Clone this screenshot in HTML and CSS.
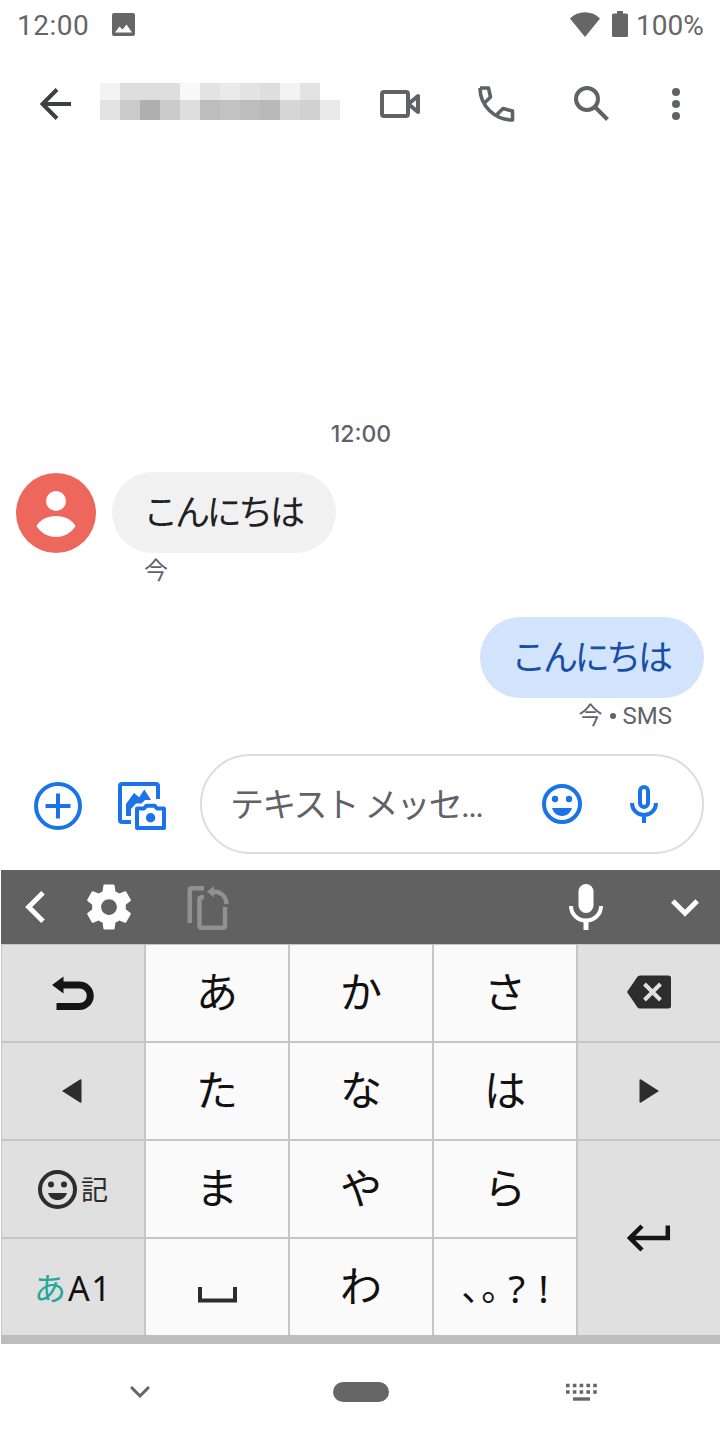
FILE: index.html
```html
<!DOCTYPE html>
<html lang="ja">
<head>
  <meta charset="UTF-8">
  <meta name="viewport" content="width=device-width, initial-scale=1.0">
  <title>メッセージ</title>
  <link rel="stylesheet" href="styles.css">
</head>
<body>
  <div class="phone">
    <div class="status-bar">
      <span class="clock">12:00</span>
      <svg class="status-image" width="23" height="23" viewBox="0 0 23 23"><path fill="#666" fill-rule="evenodd" d="M2 0h19a2 2 0 0 1 2 2v19a2 2 0 0 1-2 2H2a2 2 0 0 1-2-2V2a2 2 0 0 1 2-2zM3 19.500h17l-5.500-8-4 5-3-3z"/></svg>
      <svg class="wifi" width="30" height="25" viewBox="0 0 30 25"><path fill="#666" d="M0 6.500C8-1.700 22-1.700 30 6.500L15 25z"/></svg>
      <svg class="battery" width="16" height="26" viewBox="0 0 16 26"><path fill="#666" d="M5 0h6v2.500h3.500Q16 2.500 16 4v20.500q0 1.500-1.500 1.500h-13Q0 26 0 24.500V4q0-1.500 1.500-1.500H5z"/></svg>
      <span class="percent">100%</span>
    </div>

    <div class="app-bar">
      <svg width="32" height="32" viewBox="0 0 32 32" fill="none" stroke="#3c4043" stroke-width="4"><path d="M33 16H4M18 1.500L3.500 16 18 30.500"/></svg>
      <div class="contact-name">
        <i class="g1"></i><i class="g3"></i><i class="g3"></i><i class="g3"></i><i class="g0"></i><i class="g2"></i><i class="g12"></i><i class="g2"></i><i class="g3"></i><i class="g1"></i><i class="g2"></i><i></i>
        <i class="g2"></i><i class="g5"></i><i class="g8"></i><i class="g5"></i><i class="g3"></i><i class="g6"></i><i class="g56"></i><i class="g6"></i><i class="g7"></i><i class="g4"></i><i class="g45"></i><i class="g12"></i>
      </div>
      <svg class="video" width="40" height="32" viewBox="0 0 40 32" fill="none" stroke="#5f6368" stroke-width="4" stroke-linejoin="round"><rect x="2" y="4" width="26" height="24" rx="2"/><path d="M29 15.500L38 8v16l-9-7.500z"/></svg>
      <svg class="call" width="40" height="40" viewBox="0 0 40 40" fill="none" stroke="#5f6368" stroke-width="3.600" stroke-linejoin="round"><path d="M4 4h8.500l2 9-6.500 6.500M4 4c0 18 15 32 32.500 32v-9l-9.500-2.500-6.500 6.500"/></svg>
      <svg class="search" width="40" height="40" viewBox="0 0 40 40" fill="none" stroke="#5f6368" stroke-width="4"><circle cx="15" cy="15" r="11"/><path d="M23 23l12.500 12.500"/></svg>
      <svg class="more" width="8" height="32" viewBox="0 0 8 32" fill="#5f6368"><circle cx="4" cy="4" r="4"/><circle cx="4" cy="16" r="4"/><circle cx="4" cy="28" r="4"/></svg>
    </div>

    <div class="conversation">
      <div class="timestamp">12:00</div>
      <div class="message received">
        <svg class="avatar" width="80" height="80" viewBox="0 0 80 80"><circle cx="40" cy="40" r="40" fill="#ee675c"/><circle cx="40" cy="28" r="10" fill="#fff"/><path fill="#fff" d="M20.500 53C24 46.500 32 43 40 43s16 3.500 19.500 10C56 59.500 48 64 40 64s-16-4.500-19.500-11z"/></svg>
        <div class="content">
          <div class="bubble">こんにちは</div>
          <div class="meta">今</div>
        </div>
      </div>
      <div class="message sent">
        <div class="content">
          <div class="bubble">こんにちは</div>
          <div class="meta">今<b class="dot"></b>SMS</div>
        </div>
      </div>
    </div>

    <div class="composer">
      <svg class="plus" width="48" height="48" viewBox="0 0 48 48" fill="none" stroke="#1a73e8" stroke-width="4"><circle cx="24" cy="24" r="22"/><path d="M24 11.500v25M11.500 24h25"/></svg>
      <svg class="gallery" width="48" height="48" viewBox="0 0 48 48"><path fill="none" stroke="#1a73e8" stroke-width="4" d="M13 40H4q-2 0-2-2V4q0-2 2-2h34q2 0 2 2v13"/><path fill="#1a73e8" d="M8 34V22l8-11 5.200 4.200L26.300 7.500 33 18h-6l-3.500 3.500H18L13 27v7z"/><path fill="none" stroke="#1a73e8" stroke-width="4" stroke-linejoin="round" d="M19 26.500h7l2.500-2.800h8l2.500 2.800h7V46H19z"/><circle cx="32.600" cy="35.700" r="4.700" fill="#1a73e8"/></svg>
      <div class="input-box">
        <span class="placeholder">テキスト メッセ...</span>
        <svg width="40" height="40" viewBox="0 0 40 40" fill="#1a73e8"><circle cx="20" cy="20" r="18" fill="none" stroke="#1a73e8" stroke-width="4"/><circle cx="13" cy="15" r="3.200"/><circle cx="27" cy="15" r="3.200"/><path d="M10 24h20c-1.500 5-5.500 8-10 8s-8.500-3-10-8z"/></svg>
        <svg class="input-mic" width="28" height="38" viewBox="0 0 28 38" fill="none" stroke="#1a73e8" stroke-width="4"><rect x="10" y="2" width="8" height="20" rx="4"/><path d="M2 18c0 7 5.500 12 12 12s12-5 12-12M14 30v8"/></svg>
      </div>
    </div>

    <div class="keyboard">
      <div class="toolbar">
        <svg width="20" height="32" viewBox="0 0 20 32" fill="none" stroke="#fff" stroke-width="5"><path d="M18 1.800L3.700 16 18 30.200"/></svg>
        <svg class="gear" width="54" height="54" viewBox="0 0 24 24"><path fill="#fff" d="M19.430 12.980c.04-.32.070-.64.070-.98s-.03-.66-.07-.98l2.110-1.650c.19-.15.240-.42.120-.64l-2-3.460c-.12-.22-.39-.3-.61-.22l-2.490 1c-.52-.4-1.080-.73-1.690-.98l-.38-2.650C14.460 2.180 14.250 2 14 2h-4c-.25 0-.46.180-.49.420l-.38 2.650c-.61.250-1.170.590-1.690.980l-2.490-1c-.23-.09-.49 0-.61.220l-2 3.460c-.13.220-.07.490.120.640l2.110 1.650c-.04.320-.07.650-.07.980s.03.660.070.980l-2.110 1.650c-.19.150-.24.420-.12.640l2 3.460c.12.220.390.300.610.220l2.490-1c.52.400 1.080.730 1.690.980l.38 2.650c.03.240.240.420.490.420h4c.25 0 .46-.18.490-.42l.38-2.650c.61-.25 1.170-.59 1.690-.98l2.490 1c.23.090.490 0 .61-.22l2-3.460c.12-.22.070-.49-.12-.64l-2.110-1.650zM12 15.500c-1.930 0-3.500-1.570-3.500-3.500s1.570-3.500 3.500-3.500 3.500 1.570 3.500 3.500-1.570 3.500-3.500 3.500z"/></svg>
        <svg class="paste" width="43" height="46" viewBox="0 0 43 46" fill="none" stroke="#919191" stroke-width="4.500"><path d="M17 3.200H5Q2.800 3.200 2.800 5v33M17 12.200h-2q-2.500 0-2.500 2v26.500q0 2 2 2h21q2.500 0 2.500-2V22M26 6.500c8 0 13 5 13.500 12.500"/><path fill="#919191" stroke="none" d="M20 6.500L27 1v11.500z"/></svg>
        <svg class="voice" width="34" height="46" viewBox="0 0 34 46"><rect x="9.500" y="0" width="15" height="29" rx="7.500" fill="#fff"/><path fill="none" stroke="#fff" stroke-width="4" d="M2 22c0 8.500 7 14.500 15 14.500S32 30.500 32 22"/><path stroke="#fff" stroke-width="5" d="M17 37v9"/></svg>
        <svg class="collapse" width="28" height="18" viewBox="0 0 28 18" fill="none" stroke="#fff" stroke-width="5"><path d="M1.800 2L14 14.200 26.200 2"/></svg>
      </div>

      <div class="keys">
        <div class="key fn"><svg width="42" height="35" viewBox="0 0 42 35"><path fill="#151515" d="M0 9L11.500 .500v17z"/><path fill="none" stroke="#151515" stroke-width="7" d="M10 9h17.500a10.700 10.700 0 0 1 0 21.500H4.500"/></svg></div>
        <div class="key"><span>あ</span></div>
        <div class="key"><span>か</span></div>
        <div class="key"><span>さ</span></div>
        <div class="key fn backspace"><svg width="44" height="34" viewBox="0 0 44 34"><path fill="#2d2d2d" d="M13 .500h28.500Q44 .500 44 3v28q0 2.500-2.500 2.500H13q-1.800 0-2.800-1.500L0 17 10.200 2Q11.200.500 13 .500z"/><path stroke="#e0e0e0" stroke-width="4" d="M17.500 9l16 16M33.500 9l-16 16"/></svg></div>

        <div class="key fn left"><svg width="20" height="24" viewBox="0 0 20 24"><path fill="#2d2d2d" d="M0 12L18 .500q1.500-.8 1.500 1v21q0 1.800-1.500 1z"/></svg></div>
        <div class="key"><span>た</span></div>
        <div class="key"><span>な</span></div>
        <div class="key"><span>は</span></div>
        <div class="key fn"><svg width="20" height="24" viewBox="0 0 20 24"><path fill="#2d2d2d" d="M20 12L2 .500Q.500-.3.500 1.500v21q0 1.800 1.500 1z"/></svg></div>

        <div class="key fn emoji">
          <svg width="39" height="39" viewBox="0 0 39 39" fill="#2d2d2d"><circle cx="19.500" cy="19.500" r="17.500" fill="none" stroke="#2d2d2d" stroke-width="4"/><circle cx="13" cy="14.500" r="3"/><circle cx="26" cy="14.500" r="3"/><path d="M10 23h19c-1.500 4.500-5 7-9.500 7S11.500 27.500 10 23z"/></svg>
          <span>記</span>
        </div>
        <div class="key"><span>ま</span></div>
        <div class="key"><span>や</span></div>
        <div class="key"><span>ら</span></div>
        <div class="key fn enter"><svg width="44" height="28" viewBox="0 0 44 28" fill="none" stroke="#151515" stroke-width="4.500"><path d="M40.800 1.500V14H4M15 2L3 14l12 12"/></svg></div>

        <div class="key fn mode"><span class="kana">あ</span><span>A1</span></div>
        <div class="key space"><svg width="39" height="16" viewBox="0 0 39 16" fill="none" stroke="#2d2d2d" stroke-width="4"><path d="M2 0v13.500h35V0"/></svg></div>
        <div class="key"><span>わ</span></div>
        <div class="key punct"><span class="cjk">、</span><span class="cjk">。</span><span class="question">?</span><span>!</span></div>
      </div>
    </div>

    <div class="nav-bar">
      <svg width="20" height="12" viewBox="0 0 20 12" fill="none" stroke="#666" stroke-width="3"><path d="M1 1l9 9 9-9"/></svg>
      <div class="home-pill"></div>
      <svg class="switcher" width="31" height="18" viewBox="0 0 31 18"><path stroke="#666" stroke-width="3.600" stroke-dasharray="3.600 3.200" d="M0 2.500h31M0 9h31"/><path stroke="#666" stroke-width="3.400" d="M7 16h17"/></svg>
    </div>
  </div>
</body>
</html>
```
FILE: styles.css
```css
body {
  margin: 0;
  background-color: #fff;
  font-family: Roboto, "Noto Sans CJK JP", sans-serif;
}

svg {
  display: block;
  flex-shrink: 0;
}

.phone {
  width: 720px;
  height: 1440px;
  overflow: hidden;
  display: flex;
  flex-direction: column;
}

/* Status bar */
.status-bar {
  height: 48px;
  box-sizing: border-box;
  padding: 0 16px 0 17px;
  display: flex;
  align-items: center;
  font-size: 28px;
  color: #666;
}

.clock {
  width: 95px;
  padding-top: 2px;
  letter-spacing: 0.5px;
}

.wifi {
  margin-left: auto;
}

.battery {
  margin: 0 8px 0 12px;
}

.percent {
  padding-top: 2px;
  width: 68px;
  white-space: nowrap;
}

/* App bar */
.app-bar {
  height: 112px;
  box-sizing: border-box;
  padding-left: 39px;
  display: flex;
  align-items: center;
}

.contact-name {
  display: grid;
  grid-template-columns: repeat(12, 20px);
  grid-template-rows: 17px 20px;
  margin: -5px 0 0 29px;
}

.video {
  margin-left: 40px;
}

.call,
.search {
  margin-left: 56px;
}

.more {
  margin-left: 60px;
}

.g0 { background-color: #f8f8f8; }
.g1 { background-color: #f3f3f3; }
.g12 { background-color: #eaeaea; }
.g2 { background-color: #e3e3e3; }
.g3 { background-color: #dedede; }
.g4 { background-color: #d6d6d6; }
.g45 { background-color: #d1d1d1; }
.g5 { background-color: #cacaca; }
.g56 { background-color: #c2c2c2; }
.g6 { background-color: #bdbdbd; }
.g7 { background-color: #b9b9b9; }
.g8 { background-color: #afafaf; }

/* Conversation */
.conversation {
  height: 594px;
  box-sizing: border-box;
  padding: 260px 16px 0;
}

.timestamp {
  height: 28px;
  line-height: 28px;
  padding-left: 2px;
  text-align: center;
  font-family: Inter, sans-serif;
  font-size: 23px;
  font-weight: 500;
  color: #5f6368;
}

.message {
  display: flex;
  gap: 16px;
  margin-top: 24px;
}

.avatar {
  margin-top: 1px;
}

.sent {
  justify-content: flex-end;
  margin-top: 32px;
}

.bubble {
  width: 224px;
  height: 81px;
  box-sizing: border-box;
  padding: 1px 3px 0 0;
  line-height: 81px;
  border-radius: 41px;
  background-color: #f1f1f1;
  color: #202124;
  text-align: center;
  font-size: 35px;
  letter-spacing: -3.3px;
}

.sent .bubble {
  background-color: #d2e3fc;
  color: #174ea6;
}

.meta {
  height: 32px;
  line-height: 32px;
  padding: 2px 32px 0;
  margin-bottom: -2px;
  display: flex;
  align-items: center;
  font-size: 24px;
  color: #5f6368;
}

.sent .meta {
  justify-content: flex-end;
}

.dot {
  width: 6px;
  height: 6px;
  margin: 0 7px;
  border-radius: 50%;
  background-color: #5f6368;
}

/* Composer */
.composer {
  height: 116px;
  box-sizing: border-box;
  padding: 0 16px 0 34px;
  display: flex;
}

.plus,
.gallery {
  margin-top: 28px;
}

.gallery {
  margin-left: 36px;
}

.input-box {
  width: 504px;
  height: 100px;
  box-sizing: border-box;
  margin-left: 34px;
  padding: 0 44px 0 28px;
  border: 2px solid #dadce0;
  border-radius: 50px;
  display: flex;
  align-items: center;
}

.placeholder {
  flex: 1;
  padding-bottom: 3px;
  font-size: 34px;
  letter-spacing: -1.8px;
  white-space: nowrap;
  color: #5f6368;
}

.input-mic {
  margin-left: 48px;
}

/* Keyboard */
.keyboard {
  height: 474px;
  margin-left: 1px;
  background-color: #bdbdbd;
}

.toolbar {
  height: 74px;
  box-sizing: border-box;
  padding: 0 21px 0 24px;
  display: flex;
  align-items: center;
  background-color: #616161;
}

.gear {
  margin-left: 37px;
}

.paste {
  margin: 2px 0 0 51px;
}

.voice {
  margin: 0 68px 0 auto;
}

.collapse {
  margin-top: 2px;
}

.keys {
  padding: 1px 0 0 1px;
  display: grid;
  grid-template-columns: repeat(5, 142px);
  grid-template-rows: repeat(4, 96px);
  gap: 2px;
  background-color: #c6c6c6;
}

.key {
  display: flex;
  align-items: center;
  justify-content: center;
  background-color: #fafafa;
  color: #111;
  font-size: 42px;
  line-height: 96px;
}

.key span {
  padding-top: 2px;
}

.fn {
  background-color: #e0e0e0;
}

.backspace svg {
  margin-bottom: 2px;
}

.left svg {
  margin-right: 2px;
}

.enter {
  grid-row: span 2;
}

.emoji {
  gap: 4px;
}

.emoji span {
  padding-top: 4px;
  font-size: 27px;
  color: #2d2d2d;
}

.mode {
  gap: 2px;
  font-family: "Noto Sans", "Noto Sans CJK JP", sans-serif;
  font-size: 34px;
  letter-spacing: 1.5px;
}

.mode .kana {
  font-size: 32px;
  letter-spacing: 0;
  color: #26a69a;
}

.space svg {
  margin-top: 16px;
}

.key.punct {
  font-family: "Noto Sans", "Noto Sans CJK JP", sans-serif;
  font-size: 39px;
  gap: 2px;
}

/* half-width forms of the two CJK marks */
.punct .cjk {
  font-size: 36px;
  font-feature-settings: "halt";
}

.punct .question {
  margin: 0 11px 0 7px;
}

/* Navigation bar */
.nav-bar {
  height: 96px;
  box-sizing: border-box;
  padding-left: 130px;
  display: flex;
  align-items: center;
}

.home-pill {
  width: 56px;
  height: 20px;
  margin-left: 183px;
  border-radius: 10px;
  background-color: #666;
}

.switcher {
  margin-left: 177px;
}
```
